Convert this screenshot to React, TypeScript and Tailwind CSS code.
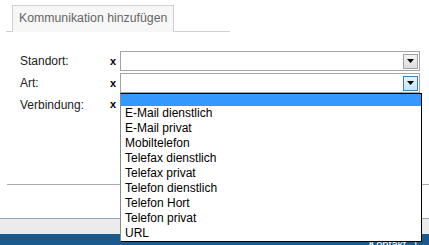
import type { ReactNode } from "react";

const options = [
  "E-Mail dienstlich",
  "E-Mail privat",
  "Mobiltelefon",
  "Telefax dienstlich",
  "Telefax privat",
  "Telefon dienstlich",
  "Telefon Hort",
  "Telefon privat",
  "URL",
];

function Arrow({ active }: { active?: boolean }) {
  return (
    <div
      className={`flex h-[15px] w-[15px] items-center justify-center border ${
        active
          ? "border-[#3c7fb1] bg-gradient-to-b from-[#e5f4fc] to-[#c4e5f6]"
          : "border-[#a3a3a3] bg-gradient-to-b from-[#f4f4f4] to-[#dcdcdc]"
      }`}
    >
      <svg width="7" height="4" viewBox="0 0 7 4">
        <path d="M0 0h7L3.5 4z" fill="#000" />
      </svg>
    </div>
  );
}

function Row({ label, h, children }: { label: string; h: string; children?: ReactNode }) {
  return (
    <div className={`flex items-center ${h}`}>
      <div className="w-[90px] text-[12px] text-[#222]">{label}</div>
      <div className="w-[10px] text-[11px] font-black leading-none text-black">x</div>
      {children}
    </div>
  );
}

function SelectBox({ active }: { active?: boolean }) {
  return (
    <div className="flex h-[20px] w-[300px] items-center justify-end border border-[#a5a5a5] bg-white pr-[1px]">
      <Arrow active={active} />
    </div>
  );
}

export default function App() {
  return (
    <div className="relative flex h-[245px] w-[429px] flex-col overflow-hidden bg-white font-['Liberation_Sans',Arial,sans-serif]">
      <div className="ml-[6px] flex h-[32px] w-[224px] items-start border-b border-[#d0d0d0] pl-[6px] pt-[5px]">
        <div className="flex h-[27px] w-[162px] items-center border border-b-0 border-[#d0d0d0] bg-[#f7f7f7] pb-[1px] pl-[6px] text-[12.3px] text-[#666]">
          Kommunikation hinzufügen
        </div>
      </div>

      <div className="ml-[20px] mt-[19px] flex flex-col gap-[2px]">
        <Row label="Standort:" h="h-[20px]">
          <SelectBox />
        </Row>
        <Row label="Art:" h="h-[20px]">
          <SelectBox active />
        </Row>
        <Row label="Verbindung:" h="h-[19px]" />
      </div>

      <div className="ml-[7px] mt-[70px] h-px bg-[#aaaaaa]" />

      <div className="mt-[33px] h-[16px] border-t border-[#8ea5bc] bg-[#ebebeb]" />
      <div className="flex h-[11px] justify-end bg-[#1b5a8c] pr-[12px] pt-[5px] text-[11px] leading-none text-white">
        <span>Kontakt</span>
        <span className="ml-[8px]">|</span>
      </div>

      <div className="absolute left-[120px] top-[93px] z-10 w-[302px] border border-black border-l-[#8a8a8a] bg-white">
        <div className="h-[12px] bg-[#3399ff]" />
        {options.map((o) => (
          <div key={o} className="h-[15px] pl-[4px] text-[12px] leading-[15px] text-black">
            {o}
          </div>
        ))}
      </div>
    </div>
  );
}
